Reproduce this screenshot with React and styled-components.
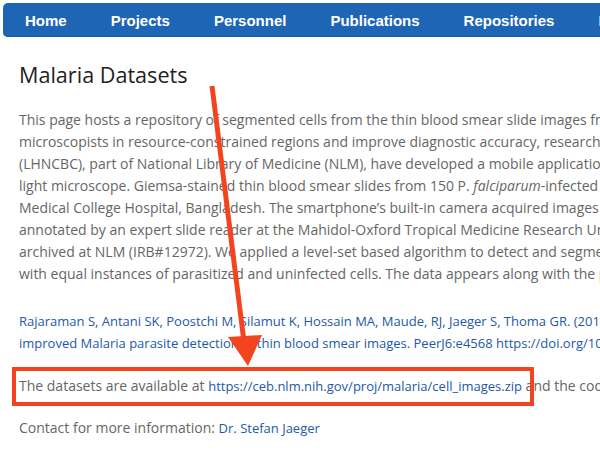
import styled, { createGlobalStyle } from 'styled-components';

const GlobalStyle = createGlobalStyle`
  html, body {
    margin: 0;
    padding: 0;
    background: #fff;
    overflow: hidden;
  }
  body {
    width: 600px;
    height: 450px;
  }
`;

const navItems = ['Home', 'Projects', 'Personnel', 'Publications', 'Repositories', 'Resources'];

const paragraph = [
  'This page hosts a repository of segmented cells from the thin blood smear slide images from the Malaria Screener research activity.',
  'microscopists in resource-constrained regions and improve diagnostic accuracy, researchers at the Lister Hill National Center',
  '(LHNCBC), part of National Library of Medicine (NLM), have developed a mobile application that runs on a standard Android',
  null,
  'Medical College Hospital, Bangladesh. The smartphone\u2019s built-in camera acquired images of slides for each microscopic field',
  'annotated by an expert slide reader at the Mahidol-Oxford Tropical Medicine Research Unit in Bangkok, Thailand.',
  'archived at NLM (IRB#12972). We applied a level-set based algorithm to detect and segment the red blood cells.',
  'with equal instances of parasitized and uninfected cells. The data appears along with the publication:',
];

function App() {
  return (
    <Page>
      <GlobalStyle />
      <NavBar>
        {navItems.map(item => (
          <NavLink key={item} href="#">{item}</NavLink>
        ))}
      </NavBar>

      <Content>
        <Title>Malaria Datasets</Title>

        <Text>
          {paragraph.map((line, i) =>
            line ? (
              <Line key={i}>{line}</Line>
            ) : (
              <Line key={i}>
                light microscope. Giemsa-stained thin blood smear slides from 150 P. <em>falciparum</em>-infected and 50 healthy patients
              </Line>
            )
          )}
        </Text>

        <Text $gap={25}>
          <Line>
            <Link href="#">Rajaraman S, Antani SK, Poostchi M, Silamut K, Hossain MA, Maude, RJ, Jaeger S, Thoma GR. (2018) Pre-trained</Link>
          </Line>
          <Line>
            <Link href="#">improved Malaria parasite detection in thin blood smear images. PeerJ6:e4568 https://doi.org/10.7717/peerj.4568</Link>
          </Line>
        </Text>

        <Text $gap={21}>
          <Line>
            The datasets are available at <Link href="#">https://ceb.nlm.nih.gov/proj/malaria/cell_images.zip</Link> and the code is on GitHub
          </Line>
        </Text>

        <Text $gap={20}>
          <Line>
            Contact for more information: <Link href="#">Dr. Stefan Jaeger</Link>
          </Line>
        </Text>
      </Content>

      <Markup width="600" height="450" viewBox="0 0 600 450">
        <line x1="212" y1="86" x2="244" y2="342" stroke="#f3441f" strokeWidth="5" />
        <polygon points="228,337 262,335 248,366" fill="#f3441f" />
        <rect x="14" y="369" width="518" height="35" fill="none" stroke="#f3441f" strokeWidth="4" />
      </Markup>
    </Page>
  );
}

export default App;

const Page = styled.div`
  position: relative;
  width: 600px;
  height: 450px;
  overflow: hidden;
  padding-top: 3px;
  box-sizing: border-box;
`;

const NavBar = styled.nav`
  display: flex;
  align-items: center;
  height: 34px;
  margin-left: 3px;
  width: 720px;
  background: #1f65b6;
  border-radius: 5px;
  box-shadow: inset 0 -1px 0 #1a5aa3;
`;

const NavLink = styled.a`
  padding: 0 22px;
  color: #fff;
  text-decoration: none;
  font-family: 'Liberation Sans', Arial, sans-serif;
  font-weight: bold;
  font-size: 15px;
  white-space: nowrap;
`;

const Content = styled.main`
  padding: 23px 0 0 19px;
  font-family: 'Open Sans', 'Noto Sans', sans-serif;
`;

const Title = styled.h1`
  margin: 0 0 19px;
  font-weight: 400;
  font-size: 21.6px;
  line-height: 30px;
  color: #222;
`;

const Text = styled.div`
  margin-top: ${p => p.$gap || 0}px;
  font-size: 14px;
  line-height: 22px;
  color: #666;
`;

const Line = styled.span`
  display: block;
  white-space: nowrap;

  em {
    font-style: italic;
  }
`;

const Link = styled.a`
  color: #2358a8;
  font-size: 13px;
  text-decoration: none;
`;

const Markup = styled.svg`
  position: absolute;
  left: 0;
  top: 0;
  pointer-events: none;
`;
